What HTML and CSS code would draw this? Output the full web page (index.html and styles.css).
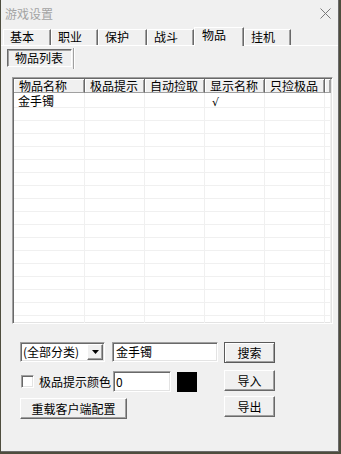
FILE: index.html
```html
<!DOCTYPE html>
<html lang="zh-CN">
<head>
    <meta charset="UTF-8">
    <meta name="viewport" content="width=device-width, initial-scale=1.0">
    <title>游戏设置</title>
    <link rel="stylesheet" href="styles.css">
</head>
<body>
    <div class="window">
        <div class="titlebar">
            <span class="title">游戏设置</span>
            <svg class="close" width="11" height="11" viewBox="0 0 11 11">
                <path d="M0.5 0.5 L10.5 10.5 M10.5 0.5 L0.5 10.5" stroke="#7a7a7a" stroke-width="1" fill="none"/>
            </svg>
        </div>

        <div class="tabs">
            <div class="tab tab-a">基本</div>
            <div class="tab tab-b">职业</div>
            <div class="tab tab-c">保护</div>
            <div class="tab tab-b">战斗</div>
            <div class="tab tab-sel">物品</div>
            <div class="tab tab-b">挂机</div>
        </div>

        <div class="pane">
            <div class="subtabs">
                <div class="subtab">物品列表</div>
                <div class="subsep"></div>
            </div>

            <div class="listview">
                <div class="lv-row lv-head">
                    <div class="lv-hcell">物品名称</div>
                    <div class="lv-hcell">极品提示</div>
                    <div class="lv-hcell">自动捡取</div>
                    <div class="lv-hcell">显示名称</div>
                    <div class="lv-hcell">只捡极品</div>
                    <div class="lv-hcell"></div>
                </div>
                <div class="lv-body">
                    <div class="lv-row first">
                        <div class="lv-cell">金手镯</div>
                        <div class="lv-cell"></div>
                        <div class="lv-cell"></div>
                        <div class="lv-cell"><span class="check">√</span></div>
                        <div class="lv-cell"></div>
                        <div class="lv-cell"></div>
                    </div>
                    <div class="lv-row"><div class="lv-cell"></div><div class="lv-cell"></div><div class="lv-cell"></div><div class="lv-cell"></div><div class="lv-cell"></div><div class="lv-cell"></div></div>
                    <div class="lv-row"><div class="lv-cell"></div><div class="lv-cell"></div><div class="lv-cell"></div><div class="lv-cell"></div><div class="lv-cell"></div><div class="lv-cell"></div></div>
                    <div class="lv-row"><div class="lv-cell"></div><div class="lv-cell"></div><div class="lv-cell"></div><div class="lv-cell"></div><div class="lv-cell"></div><div class="lv-cell"></div></div>
                    <div class="lv-row"><div class="lv-cell"></div><div class="lv-cell"></div><div class="lv-cell"></div><div class="lv-cell"></div><div class="lv-cell"></div><div class="lv-cell"></div></div>
                    <div class="lv-row"><div class="lv-cell"></div><div class="lv-cell"></div><div class="lv-cell"></div><div class="lv-cell"></div><div class="lv-cell"></div><div class="lv-cell"></div></div>
                    <div class="lv-row"><div class="lv-cell"></div><div class="lv-cell"></div><div class="lv-cell"></div><div class="lv-cell"></div><div class="lv-cell"></div><div class="lv-cell"></div></div>
                    <div class="lv-row"><div class="lv-cell"></div><div class="lv-cell"></div><div class="lv-cell"></div><div class="lv-cell"></div><div class="lv-cell"></div><div class="lv-cell"></div></div>
                    <div class="lv-row"><div class="lv-cell"></div><div class="lv-cell"></div><div class="lv-cell"></div><div class="lv-cell"></div><div class="lv-cell"></div><div class="lv-cell"></div></div>
                    <div class="lv-row"><div class="lv-cell"></div><div class="lv-cell"></div><div class="lv-cell"></div><div class="lv-cell"></div><div class="lv-cell"></div><div class="lv-cell"></div></div>
                    <div class="lv-row"><div class="lv-cell"></div><div class="lv-cell"></div><div class="lv-cell"></div><div class="lv-cell"></div><div class="lv-cell"></div><div class="lv-cell"></div></div>
                    <div class="lv-row"><div class="lv-cell"></div><div class="lv-cell"></div><div class="lv-cell"></div><div class="lv-cell"></div><div class="lv-cell"></div><div class="lv-cell"></div></div>
                    <div class="lv-row"><div class="lv-cell"></div><div class="lv-cell"></div><div class="lv-cell"></div><div class="lv-cell"></div><div class="lv-cell"></div><div class="lv-cell"></div></div>
                    <div class="lv-row"><div class="lv-cell"></div><div class="lv-cell"></div><div class="lv-cell"></div><div class="lv-cell"></div><div class="lv-cell"></div><div class="lv-cell"></div></div>
                    <div class="lv-row"><div class="lv-cell"></div><div class="lv-cell"></div><div class="lv-cell"></div><div class="lv-cell"></div><div class="lv-cell"></div><div class="lv-cell"></div></div>
                    <div class="lv-row"><div class="lv-cell"></div><div class="lv-cell"></div><div class="lv-cell"></div><div class="lv-cell"></div><div class="lv-cell"></div><div class="lv-cell"></div></div>
                    <div class="lv-row"><div class="lv-cell"></div><div class="lv-cell"></div><div class="lv-cell"></div><div class="lv-cell"></div><div class="lv-cell"></div><div class="lv-cell"></div></div>
                    <div class="lv-row"><div class="lv-cell"></div><div class="lv-cell"></div><div class="lv-cell"></div><div class="lv-cell"></div><div class="lv-cell"></div><div class="lv-cell"></div></div>
                </div>
            </div>

            <div class="controls">
                <div class="left-col">
                    <div class="ctl-row row-search">
                        <div class="combo field">
                            <span class="combo-text">(全部分类)</span>
                            <span class="combo-btn">
                                <svg width="7" height="4" viewBox="0 0 7 4"><path d="M0 0 H7 L3.5 4 Z" fill="#000"/></svg>
                            </span>
                        </div>
                        <div class="field text-input search-input">金手镯</div>
                    </div>
                    <div class="ctl-row row-color">
                        <span class="checkbox field"></span>
                        <span class="label">极品提示颜色</span>
                        <div class="field text-input color-input">0</div>
                        <span class="swatch"></span>
                    </div>
                    <div class="ctl-row row-reload">
                        <button class="btn btn-reload">重载客户端配置</button>
                    </div>
                </div>
                <div class="right-col">
                    <button class="btn btn-default">搜索</button>
                    <button class="btn btn-import">导入</button>
                    <button class="btn btn-export">导出</button>
                </div>
            </div>
        </div>
    </div>
</body>
</html>
```

FILE: styles.css
```css
body {
    margin: 0;
    padding: 0;
    background-color: #4e4d3e;
    font-family: "Noto Sans CJK SC", "Noto Sans", sans-serif;
    font-size: 12px;
    color: #000;
}

.window {
    width: 337px;
    height: 451px;
    margin-left: 1px;
    background-color: #f0f0f0;
    border-right: 1px solid #6b6b6b;
    border-bottom: 1px solid #6b6b6b;
    overflow: hidden;
}

/* title bar */
.titlebar {
    height: 26px;
    display: flex;
    align-items: center;
    justify-content: space-between;
    padding: 0 7px 0 4px;
}

.title {
    color: #a3a3a3;
    line-height: 14px;
    padding-top: 1px;
}

.close {
    margin-top: 1px;
}

/* tab strip */
.tabs {
    height: 19px;
    display: flex;
    align-items: flex-end;
    padding-left: 2px;
    border-bottom: 1px solid #fff;
}

.tab {
    box-sizing: border-box;
    height: 16px;
    padding-left: 6px;
    line-height: 14px;
    border-top: 1px solid #fff;
    border-left: 1px solid #fff;
    border-right: 1px solid #696969;
    box-shadow: inset -1px 0 #a0a0a0;
    font-size: 12px;
}

.tab-a { width: 48px; }
.tab-b { width: 47px; }
.tab-c { width: 49px; }

.tab-sel {
    width: 50px;
    height: 19px;
    margin-bottom: -1px;
    padding-left: 7px;
    line-height: 13px;
    background-color: #f0f0f0;
}

/* inner tabs */
.subtabs {
    display: flex;
    align-items: center;
    margin: 3px 0 0 6px;
    height: 18px;
}

.subtab {
    box-sizing: border-box;
    width: 65px;
    height: 18px;
    padding-left: 7px;
    line-height: 16px;
    border: 1px solid;
    border-color: #696969 #fff #fff #696969;
    box-shadow: inset 1px 1px #a0a0a0;
}

.subsep {
    width: 1px;
    height: 21px;
    margin-left: 1px;
    background-color: #a0a0a0;
    border-right: 1px solid #fff;
}

/* list view */
.listview {
    box-sizing: border-box;
    width: 321px;
    height: 247px;
    margin: 10px 0 0 11px;
    background-color: #fff;
    border: 1px solid;
    border-color: #a0a0a0 #fff #fff #a0a0a0;
    box-shadow: inset 1px 1px #696969, inset -1px -1px #e3e3e3;
    padding: 1px;
    overflow: hidden;
}

.lv-row {
    display: grid;
    grid-template-columns: 71px 60px 60px 60px 60px 1fr;
}

.lv-head {
    height: 14px;
}

.lv-hcell {
    box-sizing: border-box;
    height: 14px;
    padding-left: 5px;
    line-height: 13px;
    background-color: #f0f0f0;
    border-right: 1px solid #696969;
    border-bottom: 1px solid #a0a0a0;
    box-shadow: inset 1px 1px #fff, inset -1px 0 #a0a0a0;
    white-space: nowrap;
}

.lv-hcell:last-child {
    border-right: 1px solid #a0a0a0;
}

.lv-cell {
    box-sizing: border-box;
    height: 13px;
    padding-left: 4px;
    line-height: 12px;
    border-right: 1px solid #f0f0f0;
    border-bottom: 1px solid #f0f0f0;
    white-space: nowrap;
}

.lv-row.first .lv-cell {
    height: 15px;
    line-height: 15px;
}

.lv-cell .check {
    padding-left: 3px;
    font-family: "DejaVu Sans", sans-serif;
    font-size: 11px;
}

/* bottom controls */
.controls {
    display: flex;
    gap: 6px;
    margin: 18px 0 0 19px;
}

.left-col {
    width: 198px;
    display: flex;
    flex-direction: column;
}

.right-col {
    width: 51px;
    display: flex;
    flex-direction: column;
}

.ctl-row {
    display: flex;
    align-items: center;
}

.row-search {
    height: 20px;
    gap: 7px;
}

.row-color {
    height: 21px;
    margin-top: 9px;
}

.row-reload {
    height: 21px;
    margin-top: 6px;
}

.field {
    box-sizing: border-box;
    background-color: #fff;
    border: 1px solid;
    border-color: #a0a0a0 #fff #fff #a0a0a0;
    box-shadow: inset 1px 1px #696969, inset -1px -1px #e3e3e3;
}

.combo {
    width: 85px;
    height: 20px;
    display: flex;
    align-items: center;
    padding: 1px;
}

.combo-text {
    flex: 1;
    padding-left: 1px;
    line-height: 16px;
    white-space: nowrap;
}

.combo-btn {
    box-sizing: border-box;
    width: 16px;
    height: 16px;
    display: flex;
    align-items: center;
    justify-content: center;
    background-color: #f0f0f0;
    border: 1px solid;
    border-color: #fff #696969 #696969 #fff;
    box-shadow: inset -1px -1px #a0a0a0;
}

.text-input {
    height: 20px;
    padding-left: 3px;
    line-height: 18px;
}

.search-input {
    width: 106px;
}

.checkbox {
    width: 13px;
    height: 13px;
    margin-left: 1px;
}

.label {
    margin-left: 5px;
    width: 74px;
    line-height: 14px;
}

.color-input {
    width: 58px;
    height: 21px;
    line-height: 19px;
    padding-left: 2px;
}

.swatch {
    width: 20px;
    height: 20px;
    margin-left: 6px;
    background-color: #000;
}

/* buttons */
.btn {
    box-sizing: border-box;
    height: 21px;
    padding: 0;
    font-family: inherit;
    font-size: 12px;
    line-height: 17px;
    color: #000;
    background-color: #f0f0f0;
    border: 1px solid;
    border-color: #fff #696969 #696969 #fff;
    box-shadow: inset -1px -1px #a0a0a0;
}

.right-col .btn {
    width: 51px;
}

.btn-default {
    border: 1px solid #5a5a5a;
    box-shadow: inset 1px 1px #fff, inset -1px -1px #a0a0a0;
}

.btn-import {
    margin-top: 7px;
}

.btn-export {
    margin-top: 5px;
}

.btn-reload {
    width: 107px;
}
```
